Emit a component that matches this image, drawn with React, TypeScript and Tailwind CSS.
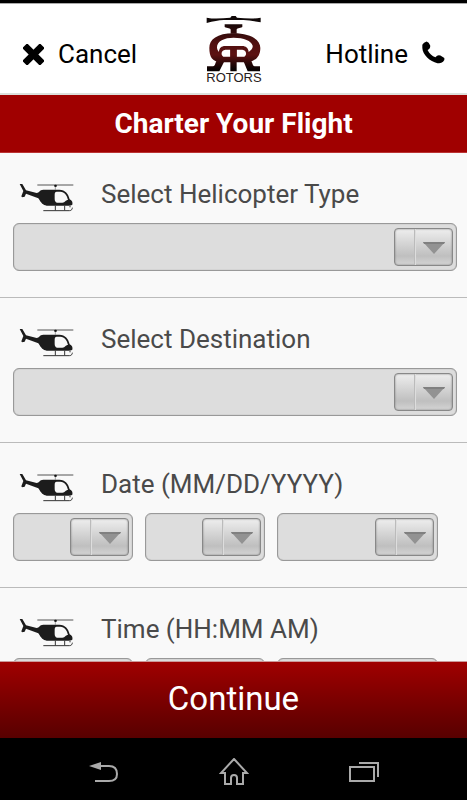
import React, { useId } from 'react';

function HelicopterIcon() {
  return (
    <svg viewBox="-3 -9 198 132" className="h-11 w-[66px] shrink-0" aria-hidden="true">
      <path d="M70 30H178" stroke="#555" strokeWidth="3" />
      <rect x="121" y="29" width="7" height="7" rx="2" fill="#111" />
      <path d="M124 35V44" stroke="#777" strokeWidth="2" />
      <path d="M17 27H25L36 46L68 54C76 53 76 45 88 44H136C154 45 163 56 167 73C174 76 177 82 175 89C171 92 160 93 155 92H98C87 91 81 83 77 76L73 70L36 56L32 65L24 67L22 64L28 48Z" fill="#1c1c1c" />
      <path d="M128 50H139C152 51 159 61 162 75C154 75 154 83 145 83H129C124 81 122 77 122 71V59C122 53 124 50 128 50Z" fill="#f9f9f9" />
      <path d="M88 107H166C173 107 175 102 175 98M124 92V106M152 92V106M168 92V97" stroke="#333" strokeWidth="3" fill="none" />
    </svg>
  );
}

function Logo() {
  return (
    <svg viewBox="0 0 62 74" className="h-[74px] w-[62px]" role="img" aria-label="Rotors">
      <defs>
        <linearGradient id="mast" gradientUnits="userSpaceOnUse" x1="0" y1="36" x2="0" y2="178">
          <stop offset="0" stopColor="#180808" />
          <stop offset="0.4" stopColor="#501010" />
          <stop offset="0.65" stopColor="#5c1111" />
          <stop offset="0.95" stopColor="#0a0202" />
        </linearGradient>
      </defs>
      <g transform="scale(.333333)">
        <path d="M11 17C35 22 58 19 82 17L86 12H98L102 17C126 19 149 22 173 17V31C153 28 137 24 122 24H62C47 24 31 28 11 33Z" fill="#100808" />
        <path d="M65 37H118V45C110 49 101 48 101 53V65H83V53C83 48 73 49 65 45Z" fill="url(#mast)" />
        <path fillRule="evenodd" d="M92 64C142 64 172 83 172 108C172 134 157 149 130 151H54C27 149 19 134 19 108C19 83 42 64 92 64ZM92 77C64 77 42 87 42 106C42 112 45 117 48 120C48 108 56 102 66 102H118C128 102 136 108 137 120C146 114 150 108 149 101C145 86 123 77 92 77ZM82 113H67C55 114 52 128 61 134H82ZM101 113V134H124C133 128 130 114 118 113Z" fill="url(#mast)" />
        <path d="M82 110H101V178H82ZM43 144H66L49 178H12V163H30C38 162 36 150 43 144ZM120 144H142C149 150 148 162 155 163H171V178H134Z" fill="url(#mast)" />
      </g>
      <text x="31" y="70" textAnchor="middle" className="fill-[#282020] font-['Liberation_Sans',sans-serif] text-[13px]">ROTORS</text>
    </svg>
  );
}

function Dropdown({ label, className }: { label: string; className: string }) {
  return (
    <div className={`relative h-12 ${className}`}>
      <select aria-label={label} className="block h-full w-full appearance-none rounded-md border border-[#999] bg-[#ddd] pr-16 pl-3 text-lg inset-shadow-[0_0_1px_#888]">
        <option></option>
      </select>
      <span aria-hidden="true" className="pointer-events-none absolute top-[5px] right-1 flex h-[38px] w-[59px] rounded-sm border border-[#888] bg-linear-to-b from-[#eee] via-[#bfbfbf] via-75% to-[#d4d4d4] inset-shadow-[0_0_2px_#777]">
        <span className="w-5 border-r border-[#bbb]" />
        <span className="flex flex-1 items-center justify-center border-l border-[#ddd] pt-0.5">
          <svg viewBox="0 0 22 12" className="h-3 w-[22px]">
            <path d="M0 0H22L11 12Z" fill="#929292" />
            <path d="M0 0H22L21 2H1Z" fill="#808080" />
          </svg>
        </span>
      </span>
    </div>
  );
}

function Field({ title, parts }: { title: string; parts?: string[] }) {
  const id = useId();
  return (
    <section role="group" aria-labelledby={id} className="h-[145px] shrink-0 border-b border-[#bbb] pr-2.5 pl-[13px]">
      <div className="flex h-[70px] items-center pt-3">
        <HelicopterIcon />
        <h2 id={id} className="pl-[22px] text-[26px] leading-8 text-[#4a4a4a]">{title}</h2>
      </div>
      <div className="flex gap-3">
        {parts ? (
          parts.map((part, i) => <Dropdown key={part} label={part} className={i === 2 ? 'w-[161px]' : 'w-[120px]'} />)
        ) : (
          <Dropdown label={title} className="w-full" />
        )}
      </div>
    </section>
  );
}

export default function App() {
  return (
    <div className="flex h-screen flex-col bg-black font-[Roboto,sans-serif]">
      <header className="mt-[3px] grid h-[92px] shrink-0 grid-cols-[1fr_auto_1fr] items-center border-t border-b-2 border-t-[#aaa] border-b-[#dce0dc] bg-white text-[26px] text-black">
        <button className="flex items-center gap-3.5 justify-self-start pt-3 pl-[23px]">
          <svg viewBox="0 0 63 63" className="h-[21px] w-[21px]" aria-hidden="true">
            <rect x="-6" y="21" width="75" height="21" rx="4" transform="rotate(45 31.5 31.5)" />
            <rect x="-6" y="21" width="75" height="21" rx="4" transform="rotate(-45 31.5 31.5)" />
          </svg>
          Cancel
        </button>
        <Logo />
        <a href="#hotline" className="flex items-center gap-3.5 justify-self-end pt-3 pr-[22px]">
          Hotline
          <svg viewBox="335 121 70 69" className="mb-1 h-[23px] w-[23px]" aria-hidden="true">
            <path d="M336 132Q340 124 349 122Q356 124 360 134Q361 143 352 148C357 158 366 167 376 170Q382 162 391 165L403 172Q405 178 399 184Q393 190 382 188C359 184 337 162 336 142Z" />
          </svg>
        </a>
      </header>
      <h1 className="flex h-[58px] shrink-0 items-center justify-center border-b border-[#b33] bg-[#a00000] text-[28px] font-bold text-white">Charter Your Flight</h1>
      <main className="flex min-h-0 flex-1 flex-col overflow-y-auto bg-[#f9f9f9] [scrollbar-width:none]">
        <Field title="Select Helicopter Type" />
        <Field title="Select Destination" />
        <Field title="Date (MM/DD/YYYY)" parts={['Month', 'Day', 'Year']} />
        <Field title="Time (HH:MM AM)" parts={['Hour', 'Minute', 'AM or PM']} />
      </main>
      <button className="h-[77px] shrink-0 border-t border-[#c99] bg-linear-to-b from-[#a00000] to-[#580000] pb-0.5 text-[33px] text-white">Continue</button>
      <nav className="grid h-[62px] shrink-0 grid-cols-[1fr_130px_130px_130px_1fr] items-center justify-items-center bg-black pt-1.5">
        <button aria-label="Back" className="col-start-2">
          <svg viewBox="0 0 30 24" className="h-6 w-[30px]" fill="none" stroke="#aaa" strokeWidth="2">
            <path d="M10 6H20Q28 6 28 14Q28 21 20 21H6" />
            <path d="M0 6L12 2V10Z" fill="#aaa" stroke="none" />
          </svg>
        </button>
        <button aria-label="Home">
          <svg viewBox="0 0 30 28" className="h-7 w-[30px]" fill="none" stroke="#aaa" strokeWidth="2">
            <path d="M15 1L28 15H24V26H18V20Q18 17 15 17T12 20V26H6V15H2Z" />
          </svg>
        </button>
        <button aria-label="Recent apps">
          <svg viewBox="0 0 30 20" className="h-5 w-[30px]" fill="none" stroke="#aaa" strokeWidth="2">
            <path d="M1 5H25V19H1ZM10 1H29V15" />
          </svg>
        </button>
      </nav>
    </div>
  );
}
